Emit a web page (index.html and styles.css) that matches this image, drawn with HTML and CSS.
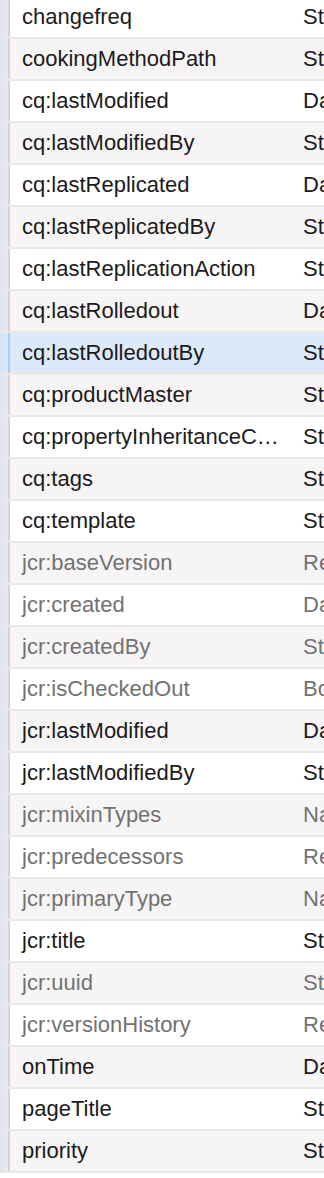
FILE: index.html
```html
<!DOCTYPE html>
<html>
<head>
<meta charset="utf-8">
<link rel="stylesheet" href="styles.css">
</head>
<body>
<div class="viewport">
  <div class="table">
    <div class="row"><div class="gutter"></div><div class="name">changefreq</div><div class="type">String</div></div>
    <div class="row"><div class="gutter"></div><div class="name">cookingMethodPath</div><div class="type">String</div></div>
    <div class="row"><div class="gutter"></div><div class="name">cq:lastModified</div><div class="type">Date</div></div>
    <div class="row"><div class="gutter"></div><div class="name">cq:lastModifiedBy</div><div class="type">String</div></div>
    <div class="row"><div class="gutter"></div><div class="name">cq:lastReplicated</div><div class="type">Date</div></div>
    <div class="row"><div class="gutter"></div><div class="name">cq:lastReplicatedBy</div><div class="type">String</div></div>
    <div class="row"><div class="gutter"></div><div class="name">cq:lastReplicationAction</div><div class="type">String</div></div>
    <div class="row"><div class="gutter"></div><div class="name">cq:lastRolledout</div><div class="type">Date</div></div>
    <div class="row selected"><div class="gutter"></div><div class="name">cq:lastRolledoutBy</div><div class="type">String</div></div>
    <div class="row"><div class="gutter"></div><div class="name">cq:productMaster</div><div class="type">String</div></div>
    <div class="row"><div class="gutter"></div><div class="name">cq:propertyInheritanceCancelled</div><div class="type">String</div></div>
    <div class="row"><div class="gutter"></div><div class="name">cq:tags</div><div class="type">String</div></div>
    <div class="row"><div class="gutter"></div><div class="name">cq:template</div><div class="type">String</div></div>
    <div class="row protected"><div class="gutter"></div><div class="name">jcr:baseVersion</div><div class="type">Reference</div></div>
    <div class="row protected"><div class="gutter"></div><div class="name">jcr:created</div><div class="type">Date</div></div>
    <div class="row protected"><div class="gutter"></div><div class="name">jcr:createdBy</div><div class="type">String</div></div>
    <div class="row protected"><div class="gutter"></div><div class="name">jcr:isCheckedOut</div><div class="type">Boolean</div></div>
    <div class="row"><div class="gutter"></div><div class="name">jcr:lastModified</div><div class="type">Date</div></div>
    <div class="row"><div class="gutter"></div><div class="name">jcr:lastModifiedBy</div><div class="type">String</div></div>
    <div class="row protected"><div class="gutter"></div><div class="name">jcr:mixinTypes</div><div class="type">Name</div></div>
    <div class="row protected"><div class="gutter"></div><div class="name">jcr:predecessors</div><div class="type">Reference</div></div>
    <div class="row protected"><div class="gutter"></div><div class="name">jcr:primaryType</div><div class="type">Name</div></div>
    <div class="row"><div class="gutter"></div><div class="name">jcr:title</div><div class="type">String</div></div>
    <div class="row protected"><div class="gutter"></div><div class="name">jcr:uuid</div><div class="type">String</div></div>
    <div class="row protected"><div class="gutter"></div><div class="name">jcr:versionHistory</div><div class="type">Reference</div></div>
    <div class="row"><div class="gutter"></div><div class="name">onTime</div><div class="type">Date</div></div>
    <div class="row"><div class="gutter"></div><div class="name">pageTitle</div><div class="type">String</div></div>
    <div class="row"><div class="gutter"></div><div class="name">priority</div><div class="type">String</div></div>
  </div>
</div>
</body>
</html>
```

FILE: styles.css
```css
html, body {
  margin: 0;
  padding: 0;
  background: #ffffff;
  overflow: hidden;
}

.viewport {
  width: 324px;
  height: 1178px;
  overflow: hidden;
}

.table {
  width: 460px;
  margin-top: -3px;
  font-family: "Liberation Sans", Arial, sans-serif;
  font-size: 22px;
  color: #1b1b1b;
}

.row {
  display: flex;
  height: 40px;
  line-height: 40px;
  border-bottom: 2px solid #ece8ea;
  background: #ffffff;
}

.row:nth-child(even) {
  background: #f7f4f5;
}

.gutter {
  flex: 0 0 8px;
  background: linear-gradient(to right, #dfe3eb, #e9ebf1);
  border-right: 2px solid #dccfd6;
}

.name {
  flex: 0 0 280px;
  box-sizing: border-box;
  padding: 0 9px 0 12px;
  white-space: nowrap;
  overflow: hidden;
  text-overflow: ellipsis;
}

.type {
  flex: 1 1 auto;
  padding-left: 13px;
  white-space: nowrap;
}

.row.protected {
  color: #727272;
}

.row.selected {
  background: #dce9f8;
}

.row.selected .gutter {
  background: linear-gradient(to right, #d3e2f3, #dbe8f6);
  border-right-color: #a9d0f2;
}
```
